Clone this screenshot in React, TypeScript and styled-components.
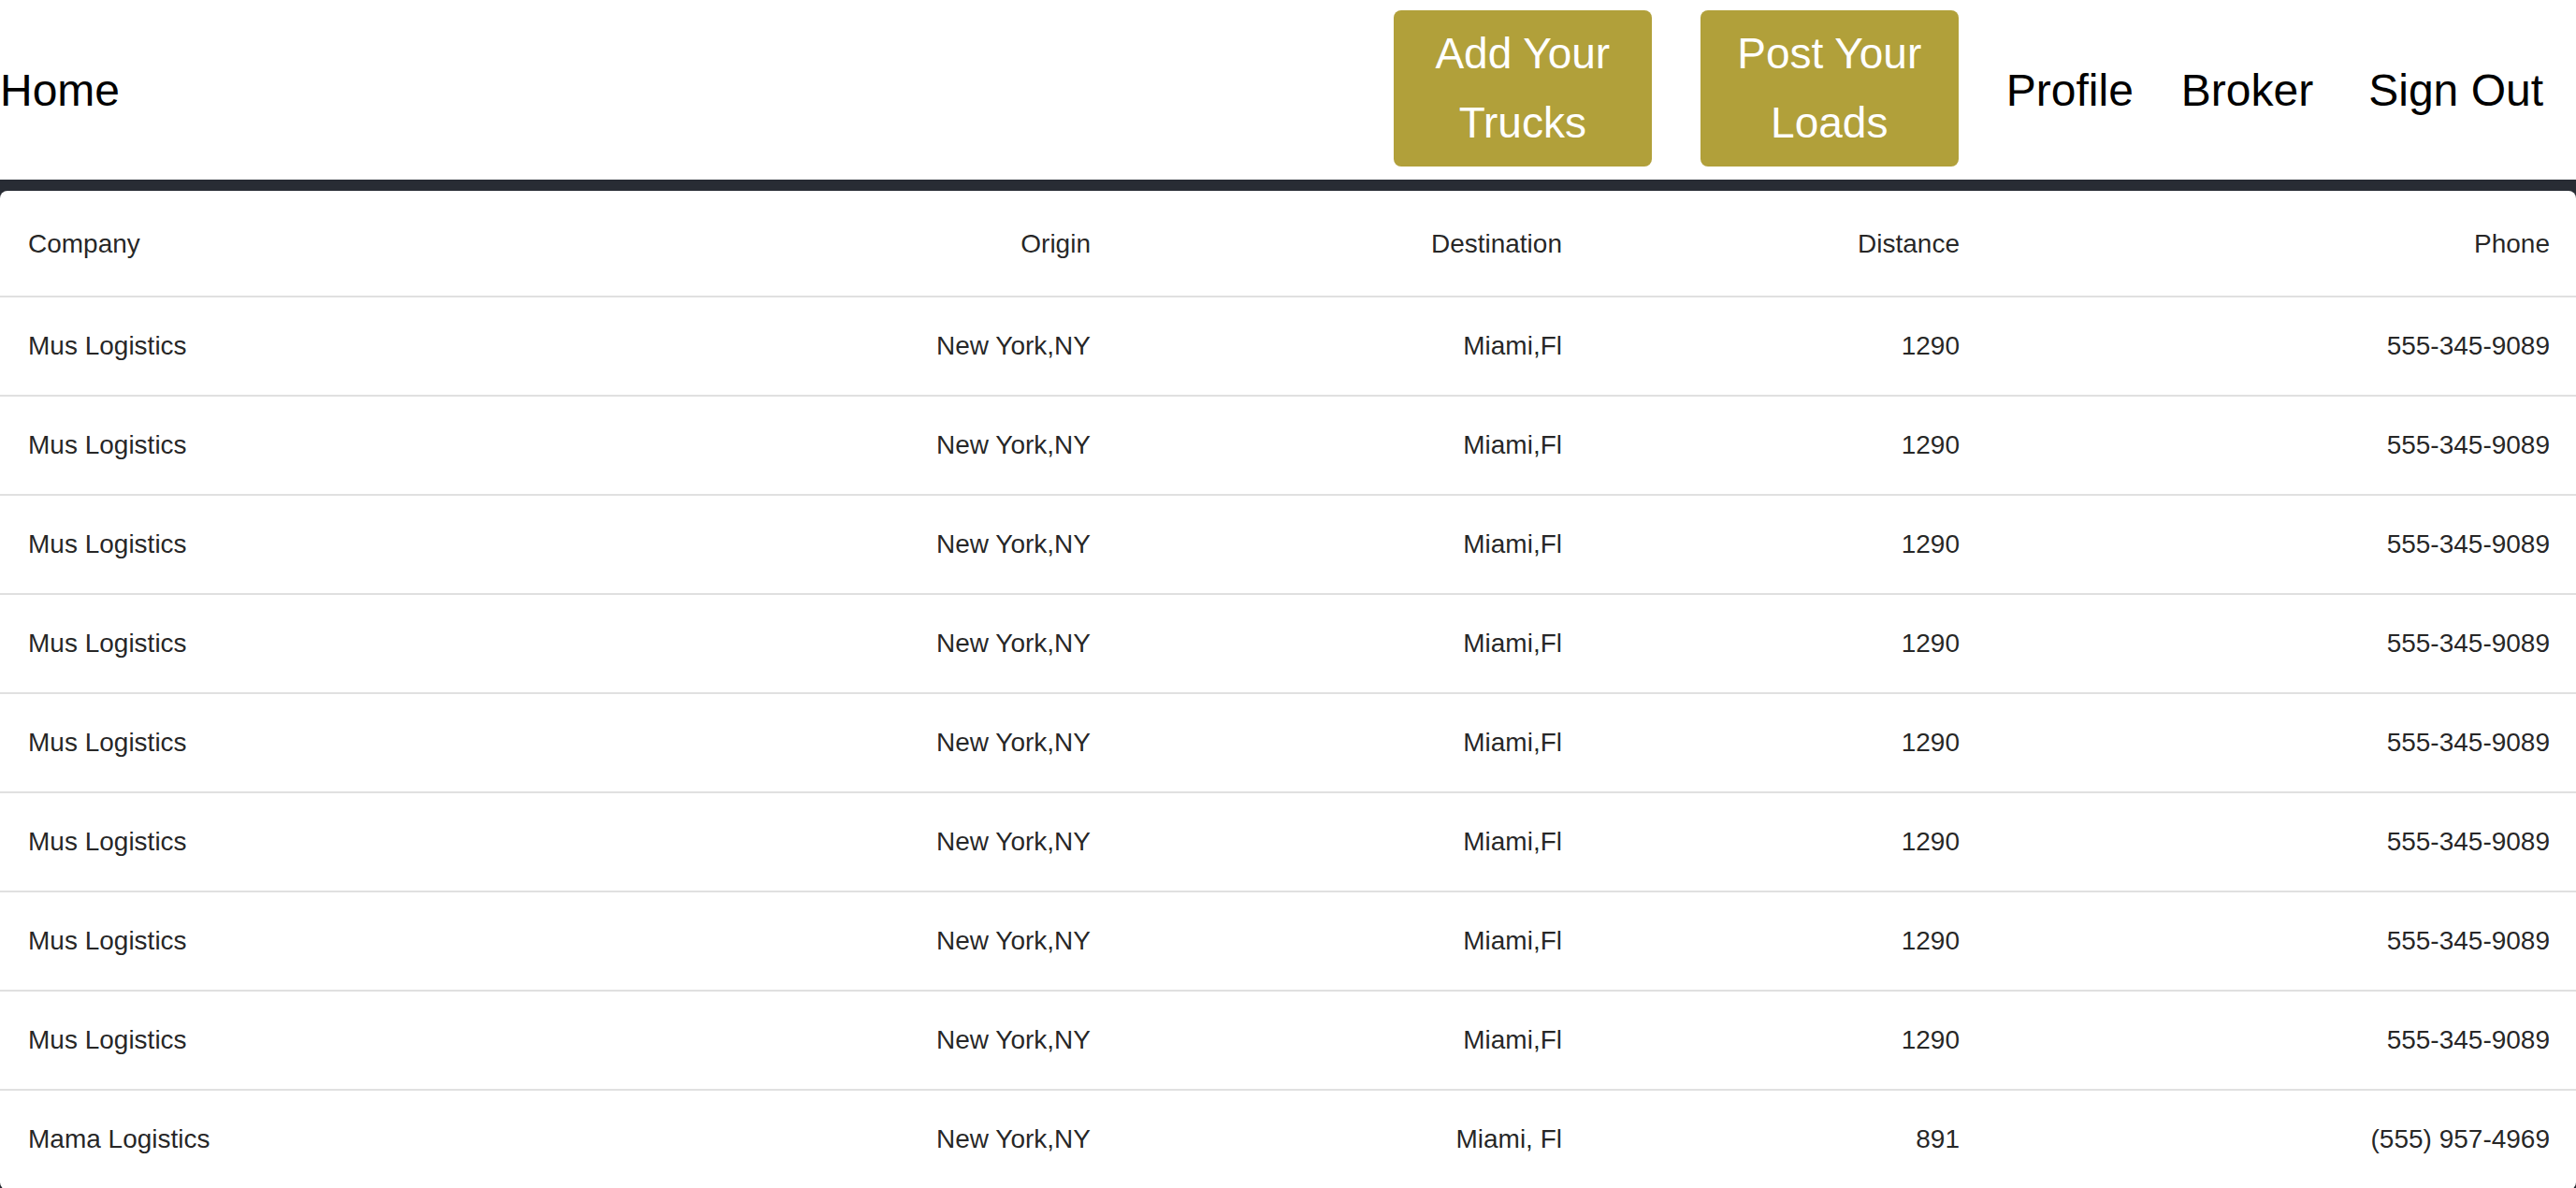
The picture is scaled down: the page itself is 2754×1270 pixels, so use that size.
import React from "react";
import styled, { createGlobalStyle } from "styled-components";

const GlobalStyle = createGlobalStyle`
  html, body {
    margin: 0;
    padding: 0;
    background: #282c34;
    font-family: "Liberation Sans", Arial, Helvetica, sans-serif;
  }
  * { box-sizing: border-box; }
`;

const Page = styled.div`
  display: flex;
  flex-direction: column;
  min-height: 100vh;
`;

const NavBar = styled.header`
  display: flex;
  align-items: center;
  height: 192px;
  background: #ffffff;
  padding-right: 35px;
`;

const HomeLink = styled.a`
  font-size: 48px;
  color: #000;
  text-decoration: none;
  margin-right: auto;
`;

const ActionButton = styled.button<{ $gap: number }>`
  width: 276px;
  height: 167px;
  margin-right: ${(p) => p.$gap}px;
  margin-bottom: 4px;
  background: #b1a03a;
  color: #ffffff;
  border: none;
  border-radius: 8px;
  font-family: inherit;
  font-size: 46px;
  line-height: 74px;
  padding: 0 30px;
  text-align: center;
  cursor: pointer;
`;

const NavLink = styled.a<{ $gap: number }>`
  font-size: 48px;
  color: #000;
  text-decoration: none;
  margin-right: ${(p) => p.$gap}px;
`;

const Content = styled.main`
  padding-top: 12px;
  flex: 1;
`;

const Paper = styled.div`
  background: #ffffff;
  border-radius: 8px;
  overflow: hidden;
  box-shadow: 0 4px 2px -2px rgba(0, 0, 0, 0.2), 0 2px 2px 0 rgba(0, 0, 0, 0.14);
`;

const Table = styled.table`
  width: 100%;
  table-layout: fixed;
  border-collapse: collapse;
  color: rgba(0, 0, 0, 0.87);
`;

const Col = styled.col<{ $w: number }>`
  width: ${(p) => p.$w}px;
`;

const Row = styled.tr``;

const HeadCell = styled.th<{ $align: string }>`
  font-size: 28px;
  font-weight: 500;
  line-height: 48px;
  padding: 33px 28px 31px 30px;
  text-align: ${(p) => p.$align};
  border-bottom: 2px solid #e0e0e0;
  white-space: nowrap;
`;

const Cell = styled.td<{ $align: string }>`
  font-size: 28px;
  font-weight: 400;
  line-height: 40px;
  padding: 32px 28px 32px 30px;
  text-align: ${(p) => p.$align};
  border-bottom: 2px solid #e0e0e0;
  white-space: nowrap;
`;

const columns = [
  { key: "company", label: "Company", align: "left", w: 600 },
  { key: "origin", label: "Origin", align: "right", w: 594 },
  { key: "destination", label: "Destination", align: "right", w: 504 },
  { key: "distance", label: "Distance", align: "right", w: 425 },
  { key: "phone", label: "Phone", align: "right", w: 631 },
] as const;

type Load = {
  company: string;
  origin: string;
  destination: string;
  distance: string;
  phone: string;
};

const mus: Load = {
  company: "Mus Logistics",
  origin: "New York,NY",
  destination: "Miami,Fl",
  distance: "1290",
  phone: "555-345-9089",
};

const rows: Load[] = [
  ...Array.from({ length: 8 }, () => mus),
  {
    company: "Mama Logistics",
    origin: "New York,NY",
    destination: "Miami, Fl",
    distance: "891",
    phone: "(555) 957-4969",
  },
];

export default function App() {
  return (
    <Page>
      <GlobalStyle />
      <NavBar>
        <HomeLink href="#">Home</HomeLink>
        <ActionButton $gap={52}>Add Your Trucks</ActionButton>
        <ActionButton $gap={51}>Post Your Loads</ActionButton>
        <NavLink href="#" $gap={51}>Profile</NavLink>
        <NavLink href="#" $gap={59}>Broker</NavLink>
        <NavLink href="#" $gap={0}>Sign Out</NavLink>
      </NavBar>
      <Content>
        <Paper>
          <Table>
            <colgroup>
              {columns.map((c) => (
                <Col key={c.key} $w={c.w} />
              ))}
            </colgroup>
            <thead>
              <Row>
                {columns.map((c) => (
                  <HeadCell key={c.key} $align={c.align}>
                    {c.label}
                  </HeadCell>
                ))}
              </Row>
            </thead>
            <tbody>
              {rows.map((r, i) => (
                <Row key={i}>
                  {columns.map((c) => (
                    <Cell key={c.key} $align={c.align}>
                      {r[c.key]}
                    </Cell>
                  ))}
                </Row>
              ))}
            </tbody>
          </Table>
        </Paper>
      </Content>
    </Page>
  );
}
